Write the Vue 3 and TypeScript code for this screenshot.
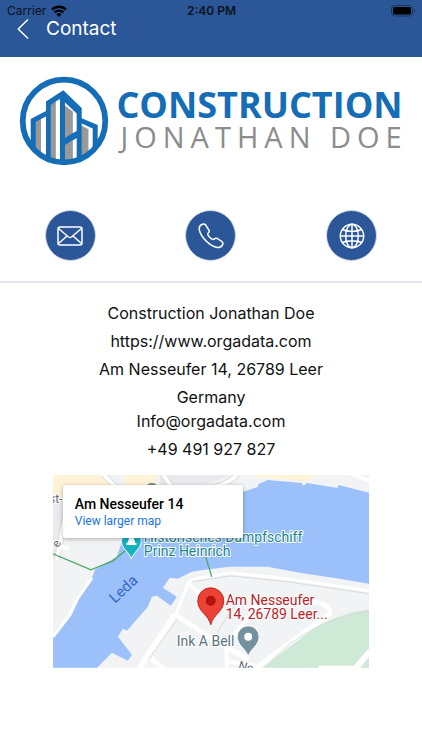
<script setup lang="ts">
interface Line {
  text: string
  href?: string
  tight?: boolean
}

const lines: Line[] = [
  { text: 'Construction Jonathan Doe' },
  { text: 'https://www.orgadata.com', href: 'https://www.orgadata.com' },
  { text: 'Am Nesseufer 14, 26789 Leer' },
  { text: 'Germany', tight: true },
  { text: 'Info@orgadata.com', href: 'mailto:Info@orgadata.com' },
  { text: '+49 491 927 827', href: 'tel:+49491927827' },
]
</script>

<template>
  <div class="screen">
    <header class="header">
      <div class="status">
        <div class="carrier">
          <span>Carrier</span>
          <svg width="16" height="12" viewBox="0 0 16 12" aria-hidden="true">
            <g fill="none" stroke="#000" stroke-width="2.3">
              <path d="M1 4.6a10 10 0 0 1 14 0" />
              <path d="M3.6 7.4a6.3 6.3 0 0 1 8.8 0" />
            </g>
            <path d="M8 12L5.4 9.3a3.7 3.7 0 0 1 5.2 0z" />
          </svg>
        </div>
        <span class="clock">2:40 PM</span>
        <div class="battery">
          <svg width="25" height="12" viewBox="0 0 25 12" aria-hidden="true">
            <rect x=".5" y=".5" width="21" height="10.5" rx="3" fill="none" stroke="#000" stroke-opacity=".4" />
            <rect x="2" y="2" width="18" height="7.5" rx="1.6" />
            <path d="M23 4v3.6c1.6-.6 1.6-3 0-3.6z" fill-opacity=".5" />
          </svg>
        </div>
      </div>
      <div class="nav">
        <button class="back" type="button" aria-label="Back">
          <svg width="12" height="20" viewBox="0 0 12 20" aria-hidden="true">
            <path d="M10.5 1L1.2 10l9.3 9" fill="none" stroke="#fff" stroke-width="1.5" stroke-linecap="round" stroke-linejoin="round" />
          </svg>
        </button>
        <h1>Contact</h1>
      </div>
    </header>

    <main>
      <div class="logo">
        <svg class="emblem" viewBox="0 0 90 90" aria-hidden="true">
          <defs>
            <clipPath id="disc"><circle cx="45" cy="45" r="43" /></clipPath>
          </defs>
          <g clip-path="url(#disc)">
            <path fill="#156db5" d="M11.7 43L27 35v-9.5l17.3-11.2L62.7 32v10.3l16 6.7v41h-67z" />
            <path fill="#999" d="M16.7 46l5.3-3v47h-5.3zM31.7 29l5-3.5V90h-5zM46 29l7.7 6v22L46 62zM46 69l7.7-5v26H46zM62.7 49l6.6 4v37h-6.6z" />
            <path fill="#fff" d="M22 43l5-2.500V90h-5zM36.700 25.500L41 23v67h-4.300zM46 26.500l11.700 11V55l-4 2.200V35.500L46 29.500zM53.700 64.500l4-2.500v28h-4zM62.700 47.500l11 5V90h-4.400V53.200l-6.600-3.700z" />
          </g>
          <circle cx="45" cy="45" r="41.300" fill="none" stroke="#156db5" stroke-width="5.800" />
        </svg>
        <div class="wordmark">
          <span class="word-top">CONSTRUCTION</span>
          <span class="word-bottom">JONATHAN DOE</span>
        </div>
      </div>

      <nav class="actions" aria-label="Contact options">
        <a class="action" href="mailto:Info@orgadata.com" aria-label="Send email">
          <svg width="26" height="26" viewBox="0 0 26 26" aria-hidden="true">
            <rect x="1" y="4" width="24" height="18" rx="2" />
            <path d="M1.500 5.500L11.500 14q1.500 1 3 0L24.500 5.500M1.500 20.500l8.500-7.500M24.500 20.500L16 13" />
          </svg>
        </a>
        <a class="action" href="tel:+49491927827" aria-label="Call">
          <svg width="26" height="26" viewBox="0 0 26 26" aria-hidden="true">
            <path d="M4.300 1.200Q6.500.4 7.700 2L11 7.300Q11.600 8.600 10.500 9.700 9.300 11 10 12.200 11.600 14.800 14 16.200 15.200 16.900 16.400 15.800 17.800 14.700 19.300 15.500L24 18.700Q25.500 20 24.500 22 22.800 24.700 19.500 24.600 12 23 5.800 15.500 1.300 10 1.200 5.200 1.500 2.300 4.300 1.200z" />
          </svg>
        </a>
        <a class="action" href="https://www.orgadata.com" aria-label="Open website">
          <svg width="26" height="26" viewBox="0 0 26 26" aria-hidden="true">
            <circle cx="13" cy="13" r="11.700" />
            <ellipse cx="13" cy="13" rx="6.300" ry="11.700" />
            <path d="M13 1.300v23.400M1.300 13h23.400M3.500 6.500c4.500 2.500 14.500 2.500 19 0M3.500 19.500c4.500-2.500 14.500-2.500 19 0" />
          </svg>
        </a>
      </nav>

      <address class="details">
        <p v-for="line in lines" :key="line.text" :class="{ tight: line.tight }">
          <a v-if="line.href" :href="line.href">{{ line.text }}</a>
          <template v-else>{{ line.text }}</template>
        </p>
      </address>

      <section class="map" aria-label="Map">
        <svg class="map-art" viewBox="53 475 317 193">
          <rect x="53" y="475" width="317" height="193" fill="#f1f3f4" />
          <path fill="#fef3d6" d="M53 475h49l14 11v20H53zM124 475h32v12h-32zM256 475h57l-1 5-11 1-33-3-12-1z" />
          <path fill="#e8eaed" d="M53 500h12l-7 60-5-2zM160 475h70l-30 12h-40z" />
          <g fill="none" stroke="#dadce0" stroke-width="6">
            <path d="M103 474l14 14M163 474l8 12M238 474q-10 11-28 14M67 505L57 560" />
          </g>
          <g fill="none" stroke="#fff" stroke-width="4">
            <path d="M103 474l14 14M163 474l8 12M238 474q-10 11-28 14M67 505L57 560M54 544l15 5M352 474l18 7" />
          </g>
          <circle cx="152" cy="490" r="7" fill="#71838b" />

          <path
            fill="#9cc0f9"
            d="M53 668V637L70 615 78 598 92 578 95 570 117 557 123 538 200 505 243 492 258 487 259 484 268 480 302 483 304 486 307 483 338 488 339 485 370 493V584L340 579 300 573 268 567 230 567 205 570 192 572 178 579 170 578 163 588 177 597 171 606 157 596 152 597 148 607 127 631 123 629 118 637 132 655 128 661 112 653 97 668z"
          />
          <path fill="#ceead6" d="M263 668q22-18 45-35 30-20 62-23v58z" />

          <g fill="none" stroke="#fff" stroke-linejoin="round">
            <path stroke-width="3" d="M53 637l17-22 8-17 14-20" />
            <path stroke-width="3" d="M177 613l11-29q2-4 8-5l34-6 58 6 82 12" />
            <path stroke-width="6" d="M138 671l37-56" />
            <path stroke-width="5" d="M174 614l41 27 34 19M151 659l16 12" />
            <path stroke-width="4" d="M188 584l14 11M227 671v-27l27-33M228 662l28 4" />
            <path stroke-width="5" d="M254 670l68-50q10-6 8-10-4-7-17-8l-60 5" />
            <path stroke-width="6" d="M354 671l17-20" />
          </g>
          <path fill="none" stroke="#d7dbde" d="M193 582l38-6 57 6 82 12M272 661q36-39 98-50M177 620l-28 39M218 632l18-28" />
          <path fill="none" stroke="#49a866" stroke-width="1.300" d="M53 554l38 16 22-9 17-14M206 557l6 20" />
          <rect x="319" y="666" width="40" height="3" fill="#fff" />

          <g class="halo">
            <text class="teal" x="144" y="542">Historisches Dampfschiff</text>
            <text class="teal" x="144" y="556">Prinz Heinrich</text>
            <text class="river" transform="translate(115 604) rotate(-43)">Leda</text>
            <text class="grey" x="177" y="646">Ink A Bell</text>
            <text class="street" transform="translate(238 669) rotate(16)">Ne</text>
            <text class="street" x="49" y="503">st-</text>
            <text class="street" transform="translate(59 548) rotate(-70)">e</text>
          </g>

          <path fill="#12b5bd" stroke="#fff" d="M131.500 559c-2-7-10-10-10-18a10 10 0 0 1 20 0c0 8-8 11-10 18z" />
          <path fill="#fff" d="M126.500 545h10v-2h-1l-2-6h-4l-2 6h-1z" />
          <path fill="#75919f" stroke="#fff" d="M248.500 657c-2-8-11-11-11-20a11 11 0 0 1 22 0c0 9-9 12-11 20z" />
          <circle cx="248.500" cy="637" r="4" fill="#fff" />
          <path fill="#ea4335" stroke="#c5221f" d="M211 625c-2-10-13-13-13-24a13 13 0 0 1 26 0c0 11-11 14-13 24z" />
          <circle cx="211" cy="601" r="5" fill="#b31412" />
          <g class="halo">
            <text class="red" x="226" y="605">Am Nesseufer</text>
            <text class="red" x="226" y="619">14, 26789 Leer...</text>
          </g>
        </svg>
        <div class="place">
          <strong>Am Nesseufer 14</strong>
          <a href="https://www.orgadata.com">View larger map</a>
        </div>
      </section>
    </main>
  </div>
</template>

<style>
body {
  margin: 0;
  background: #fff;
}
</style>

<style scoped>
.screen {
  font-family: Inter, "Liberation Sans", sans-serif;
  color: #111;
}

.header {
  box-sizing: border-box;
  height: 57px;
  background: #2b5798;
}

.status {
  display: grid;
  grid-template-columns: 1fr auto 1fr;
  align-items: center;
  height: 20px;
  padding: 1px 6px 0 7px;
  box-sizing: border-box;
  font-size: 12px;
  line-height: 20px;
  color: #0a1220;
}

.carrier {
  display: flex;
  align-items: center;
  gap: 5px;
}

.clock {
  font-weight: 600;
}

.battery {
  display: flex;
  justify-content: flex-end;
}

.nav {
  display: flex;
  align-items: center;
  gap: 14px;
  height: 18px;
  padding-left: 14px;
}

.back {
  display: flex;
  padding: 0 3px;
  border: 0;
  background: none;
}

h1 {
  margin: 0;
  font-size: 19px;
  font-weight: 400;
  line-height: 24px;
  color: #fff;
}

.logo {
  display: flex;
  justify-content: center;
  gap: 7px;
  padding: 19px 0 44px;
}

.emblem {
  width: 90px;
  height: 90px;
}

.wordmark {
  display: flex;
  flex-direction: column;
  padding-top: 13px;
  font-family: "Open Sans", sans-serif;
  white-space: nowrap;
}

.word-top {
  font-size: 36px;
  font-weight: 700;
  line-height: 32px;
  color: #156db5;
}

.word-bottom {
  width: 0;
  padding-left: 4px;
  font-size: 29px;
  line-height: 32px;
  letter-spacing: 6px;
  color: #8c8c8c;
}

.actions {
  display: grid;
  grid-template-columns: repeat(3, 1fr);
  justify-items: center;
  padding-bottom: 20px;
  border-bottom: 2px solid #e3e3eb;
}

.action {
  display: flex;
  align-items: center;
  justify-content: center;
  width: 49px;
  height: 49px;
  border: 1px solid #d3dbe8;
  border-radius: 50%;
  background: #2b5798;
}

.action svg {
  fill: none;
  stroke: #fff;
  stroke-width: 1.5px;
  stroke-linejoin: round;
}

.details {
  display: flex;
  flex-direction: column;
  align-items: center;
  padding: 18px 0 10px;
  font-size: 16px;
  font-style: normal;
  line-height: 24px;
}

.details p {
  margin: 0 0 4px;
}

.details .tight {
  margin-bottom: 0;
}

.details a {
  color: inherit;
  text-decoration: none;
}

.map {
  position: relative;
  width: 75%;
  margin: 0 auto;
}

.map-art {
  display: block;
  width: 100%;
  font-family: Roboto, sans-serif;
}

.halo text {
  font-size: 14px;
  paint-order: stroke;
  stroke: #fff;
  stroke-width: 2px;
  stroke-linejoin: round;
}

.halo .teal {
  fill: #16838f;
}

.halo .river {
  font-size: 15px;
  fill: #3367c6;
  stroke: none;
}

.halo .grey {
  fill: #5b7380;
}

.halo .street {
  font-size: 12px;
  fill: #62686d;
}

.halo .red {
  fill: #b8231f;
}

.place {
  position: absolute;
  top: 10px;
  left: 10px;
  display: flex;
  flex-direction: column;
  box-sizing: border-box;
  width: 180px;
  padding: 10px 12px 9px;
  border-radius: 2px;
  background: #fff;
  box-shadow: 0 1px 4px rgb(0 0 0 / 30%);
  font-family: Roboto, sans-serif;
}

.place strong {
  font-size: 14px;
  font-weight: 500;
  line-height: 18px;
  color: #000;
}

.place a {
  font-size: 12px;
  line-height: 16px;
  color: #1a73e8;
  text-decoration: none;
}
</style>
